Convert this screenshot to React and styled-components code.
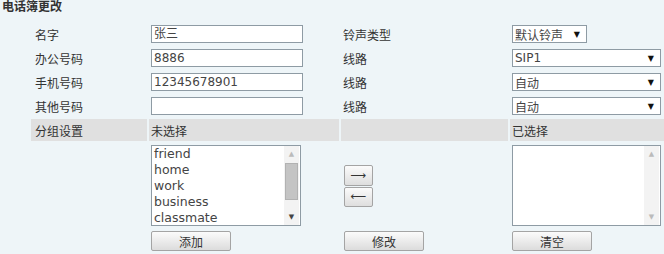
import React from "react";
import styled, { createGlobalStyle } from "styled-components";

const Global = createGlobalStyle`
  html, body { margin: 0; padding: 0; background: #eef5f8; }
  body { font-family: "DejaVu Sans", "Noto Sans CJK SC", sans-serif; font-size: 12px; color: #333; }
`;

const Page = styled.div`
  width: 664px;
  height: 254px;
  overflow: hidden;
  background: #eef5f8;
`;

const Title = styled.div`
  height: 23px;
  padding-left: 2px;
  font-weight: bold;
  font-size: 12px;
  line-height: 15px;
  color: #333;
`;

const Grid = styled.div`
  margin-left: 31px;
  display: grid;
  grid-template-columns: 116px 190px 167px 154px;
  grid-template-rows: 22px 22px 22px 22px 22px auto auto;
  column-gap: 2px;
  row-gap: 2px;
`;

const Cell = styled.div`
  display: flex;
  align-items: center;
  padding-left: ${(p) => p.$pad ?? 2}px;
  background: ${(p) => (p.$band ? "#e0e0e0" : "transparent")};
  color: #333;
  white-space: nowrap;
`;

const Input = styled.div`
  box-sizing: border-box;
  width: 152px;
  height: 18px;
  border: 1px solid #8e9ba4;
  background: #fff;
  padding-left: 2px;
  line-height: 16px;
  font-size: 12px;
  color: #444;
`;

const Select = styled.div`
  box-sizing: border-box;
  width: ${(p) => p.$w}px;
  height: 18px;
  border: 1px solid #8e9ba4;
  background: #fff;
  padding: 0 6px 0 2px;
  display: flex;
  align-items: center;
  justify-content: space-between;
  font-size: 12px;
  color: #444;
`;

const Arrow = styled.span`
  font-size: 8px;
  color: #111;
`;

const ListCell = styled.div`
  padding: 2px 0 2px 2px;
  display: flex;
  align-items: center;
`;

const ListBox = styled.div`
  box-sizing: border-box;
  width: ${(p) => p.$w}px;
  height: 81px;
  border: 1px solid #8e9ba4;
  background: #fff;
  display: flex;
  overflow: hidden;
`;

const Items = styled.div`
  flex: 1;
  padding: 0 0 0 2px;
`;

const Item = styled.div`
  line-height: 16px;
  font-size: 12.5px;
  color: #444;
`;

const Scroll = styled.div`
  width: 15px;
  margin-right: 1px;
  background: #f3f3f3;
  display: flex;
  flex-direction: column;
  align-items: center;
`;

const ScrollArrow = styled.div`
  height: 16px;
  display: flex;
  align-items: center;
  justify-content: center;
  font-size: 7px;
  color: ${(p) => (p.$dim ? "#bbb" : "#444")};
`;

const Track = styled.div`
  flex: 1;
  width: 100%;
  display: flex;
  flex-direction: column;
  align-items: center;
`;

const Thumb = styled.div`
  box-sizing: border-box;
  width: 13px;
  height: 37px;
  margin-top: 1px;
  background: #c4c4c4;
  border: 1px solid #b2b2b2;
`;

const MoveCol = styled.div`
  padding-left: 3px;
  display: flex;
  flex-direction: column;
  justify-content: center;
  gap: 1px;
`;

const SmallBtn = styled.div`
  box-sizing: border-box;
  width: 29px;
  height: ${(p) => p.$h}px;
  border: 1px solid #a4a4a4;
  border-radius: 2px;
  background: linear-gradient(#fbfbfb, #dedede);
  display: flex;
  align-items: center;
  justify-content: center;
  font-size: 11px;
  color: #333;
`;

const BtnCell = styled.div`
  padding: 1px 0 0 ${(p) => p.$pad ?? 2}px;
`;

const Button = styled.div`
  box-sizing: border-box;
  width: 80px;
  height: 20px;
  border: 1px solid #a4a4a4;
  border-radius: 2px;
  background: linear-gradient(#fbfbfb, #dcdcdc);
  display: flex;
  align-items: center;
  justify-content: center;
  font-size: 12px;
  color: #333;
`;

const rows = [
  { label: "名字", value: "张三", label2: "铃声类型", sel: "默认铃声", w: 75 },
  { label: "办公号码", value: "8886", label2: "线路", sel: "SIP1", w: 149 },
  { label: "手机号码", value: "12345678901", label2: "线路", sel: "自动", w: 149 },
  { label: "其他号码", value: "", label2: "线路", sel: "自动", w: 149 },
];

const groups = ["friend", "home", "work", "business", "classmate"];

export default function App() {
  return (
    <Page>
      <Global />
      <Title>电话簿更改</Title>
      <Grid>
        {rows.map((r, i) => (
          <React.Fragment key={i}>
            <Cell $pad={4}>{r.label}</Cell>
            <Cell>
              <Input>{r.value}</Input>
            </Cell>
            <Cell>{r.label2}</Cell>
            <Cell>
              <Select $w={r.w}>
                <span>{r.sel}</span>
                <Arrow>▼</Arrow>
              </Select>
            </Cell>
          </React.Fragment>
        ))}
        <Cell $band $pad={4}>分组设置</Cell>
        <Cell $band>未选择</Cell>
        <Cell $band />
        <Cell $band>已选择</Cell>

        <div />
        <ListCell>
          <ListBox $w={150}>
            <Items>
              {groups.map((g) => (
                <Item key={g}>{g}</Item>
              ))}
            </Items>
            <Scroll>
              <ScrollArrow $dim>▲</ScrollArrow>
              <Track>
                <Thumb />
              </Track>
              <ScrollArrow>▼</ScrollArrow>
            </Scroll>
          </ListBox>
        </ListCell>
        <MoveCol>
          <SmallBtn $h={21}>⟶</SmallBtn>
          <SmallBtn $h={20}>⟵</SmallBtn>
        </MoveCol>
        <ListCell>
          <ListBox $w={149}>
            <Items />
            <Scroll>
              <ScrollArrow $dim>▲</ScrollArrow>
              <Track />
              <ScrollArrow $dim>▼</ScrollArrow>
            </Scroll>
          </ListBox>
        </ListCell>

        <div />
        <BtnCell>
          <Button>添加</Button>
        </BtnCell>
        <BtnCell $pad={3}>
          <Button>修改</Button>
        </BtnCell>
        <BtnCell>
          <Button>清空</Button>
        </BtnCell>
      </Grid>
    </Page>
  );
}
